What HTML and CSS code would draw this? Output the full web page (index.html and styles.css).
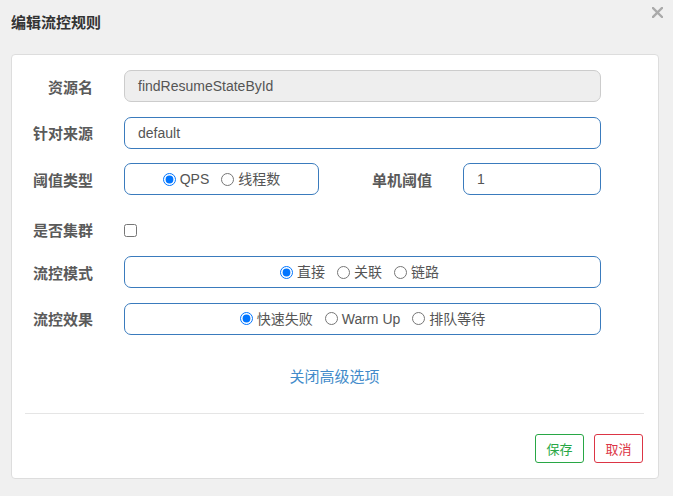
FILE: index.html
```html
<!DOCTYPE html>
<html lang="zh-CN">
<head>
<meta charset="utf-8">
<title>编辑流控规则</title>
<link rel="stylesheet" href="styles.css">
</head>
<body>
<div class="dialog">
  <div class="header">
    <span class="title">编辑流控规则</span>
    <svg class="close" width="11" height="11" viewBox="0 0 11 11"><path d="M1 1L10 10M10 1L1 10" stroke="#aaa" stroke-width="2.4" stroke-linecap="square"/></svg>
  </div>
  <div class="panel">
    <div class="row">
      <label class="lbl">资源名</label>
      <div class="field wide disabled">findResumeStateById</div>
    </div>
    <div class="row">
      <label class="lbl">针对来源</label>
      <div class="field wide">default</div>
    </div>
    <div class="row">
      <label class="lbl">阈值类型</label>
      <div class="field group narrow">
        <label class="opt"><input type="radio" name="grade" checked>QPS</label>
        <label class="opt"><input type="radio" name="grade">线程数</label>
      </div>
      <label class="lbl lbl2">单机阈值</label>
      <div class="field small">1</div>
    </div>
    <div class="row row-check">
      <label class="lbl">是否集群</label>
      <input class="check" type="checkbox">
    </div>
    <div class="row">
      <label class="lbl">流控模式</label>
      <div class="field group wide shift">
        <label class="opt"><input type="radio" name="mode" checked>直接</label>
        <label class="opt"><input type="radio" name="mode">关联</label>
        <label class="opt"><input type="radio" name="mode">链路</label>
      </div>
    </div>
    <div class="row">
      <label class="lbl">流控效果</label>
      <div class="field group wide">
        <label class="opt"><input type="radio" name="effect" checked>快速失败</label>
        <label class="opt"><input type="radio" name="effect">Warm Up</label>
        <label class="opt"><input type="radio" name="effect">排队等待</label>
      </div>
    </div>
    <div class="toggle"><a class="link">关闭高级选项</a></div>
    <div class="divider"></div>
    <div class="actions">
      <button class="btn btn-save">保存</button>
      <button class="btn btn-cancel">取消</button>
    </div>
  </div>
</div>
</body>
</html>
```
FILE: styles.css
```css
html, body {
  margin: 0;
  padding: 0;
  background: #f0f0f0;
}
body {
  font-family: "Liberation Sans", "Noto Sans CJK SC", sans-serif;
  color: #555;
}
.dialog {
  width: 673px;
}
.header {
  display: flex;
  justify-content: space-between;
  align-items: flex-start;
  padding: 13px 10px 0 11px;
  height: 54px;
  box-sizing: border-box;
}
.title {
  font-size: 15px;
  line-height: 20px;
  font-weight: 700;
  color: #333;
}
.close {
  margin-top: -6px;
}
.panel {
  margin-left: 11px;
  width: 648px;
  box-sizing: border-box;
  background: #fff;
  border: 1px solid #ddd;
  border-radius: 4px;
  padding: 15px 14px 15px 13px;
}
.row {
  display: flex;
  align-items: center;
  height: 32px;
  margin-bottom: 14.6px;
}
.lbl {
  width: 68px;
  flex: none;
  text-align: right;
  font-size: 15px;
  font-weight: 700;
  color: #5a5a5a;
  margin-right: 31px;
}
.lbl2 {
  width: 113px;
}
.field {
  box-sizing: border-box;
  height: 32px;
  border: 1px solid #3a7bbd;
  border-radius: 7px;
  padding: 0 13px;
  font-size: 14px;
  line-height: 30px;
  color: #555;
}
.wide { width: 477px; }
.narrow { width: 195px; }
.small { width: 138px; }
.disabled {
  background: #eee;
  border-color: #ccc;
}
.group {
  display: flex;
  justify-content: center;
  align-items: center;
  gap: 12px;
  padding: 0;
}
.shift {
  padding-right: 6px;
}
.opt {
  display: flex;
  align-items: center;
  font-size: 14px;
  color: #555;
}
.opt input {
  margin: 0 4px 0 0;
  width: 13px;
  height: 13px;
}
.row-check {
  align-items: flex-start;
  padding-top: 12px;
  box-sizing: border-box;
}
.row-check .lbl {
  line-height: 18px;
  margin-top: 0;
}
.check {
  margin: 2px 0 0 0;
  width: 13px;
  height: 13px;
}
.toggle {
  text-align: center;
  margin-top: 32px;
  line-height: 20px;
}
.link {
  font-size: 15px;
  color: #428bca;
}
.divider {
  height: 1px;
  background: #e5e5e5;
  margin-top: 26px;
}
.actions {
  display: flex;
  justify-content: flex-end;
  gap: 10px;
  margin-top: 20px;
  padding-right: 1px;
}
.btn {
  box-sizing: border-box;
  width: 49px;
  height: 29px;
  background: #fff;
  border: 1px solid;
  border-radius: 3px;
  font-family: "Liberation Sans", "Noto Sans CJK SC", sans-serif;
  font-size: 13px;
  padding: 0;
}
.btn-save {
  color: #28a745;
  border-color: #28a745;
}
.btn-cancel {
  color: #dc3545;
  border-color: #dc3545;
}
```
